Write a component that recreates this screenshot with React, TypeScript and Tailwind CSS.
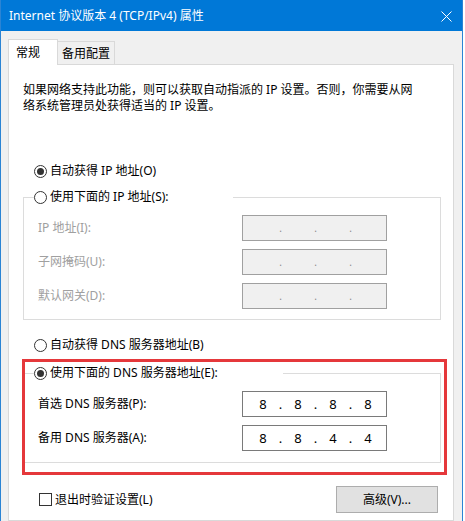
import React from "react";

const FONT = "font-['Noto_Sans','Noto_Sans_CJK_SC',sans-serif]";

function Radio({ checked }: { checked?: boolean }) {
  return (
    <span className="flex items-center justify-center w-[13px] h-[13px] shrink-0 rounded-full border border-[#333333] bg-white">
      {checked && <span className="w-[7px] h-[7px] rounded-full bg-[#333333]" />}
    </span>
  );
}

function IpBox({ values, enabled }: { values: string[]; enabled?: boolean }) {
  const parts: React.ReactNode[] = [];
  values.forEach((v, i) => {
    parts.push(
      <span key={"n" + i} className="w-[28px] text-center">
        {v}
      </span>
    );
    if (i < values.length - 1) {
      parts.push(
        <span
          key={"d" + i}
          className={`w-[7px] text-center ${enabled ? "" : "text-[#8a8a8a] text-[10px]"}`}
        >
          .
        </span>
      );
    }
  });
  return (
    <div
      className={`flex items-center w-[145px] h-[26px] pl-[6px] text-[13px] leading-[16px] border ${
        enabled ? "bg-white border-[#7a7a7a] text-black" : "bg-[#f0f0f0] border-[#a0a0a0]"
      }`}
    >
      {parts}
    </div>
  );
}

function Field({ label, values, enabled }: { label: string; values: string[]; enabled?: boolean }) {
  return (
    <div className="flex items-center h-[26px]">
      <span className={`w-[204px] ${enabled ? "text-black" : "text-[#a0a0a0]"}`}>{label}</span>
      <IpBox values={values} enabled={enabled} />
    </div>
  );
}

export default function App() {
  return (
    <div className={`w-[465px] h-[521px] overflow-hidden bg-white ${FONT} text-[12px] leading-[16px] text-black`}>
      <div className="w-[463px] h-full flex flex-col bg-[#f0f0f0] border-x border-[#2b84d4]">
        {/* title bar */}
        <div className="flex items-center justify-between h-[31px] bg-[#0078d7] pl-[8px] pr-[10px] text-white shrink-0">
          <span>Internet 协议版本 4 (TCP/IPv4) 属性</span>
          <svg width="11" height="11" viewBox="0 0 11 11" className="mt-px">
            <path d="M0.5 0.5 L10.5 10.5 M10.5 0.5 L0.5 10.5" stroke="#ffffff" strokeWidth="1" />
          </svg>
        </div>

        {/* tabs */}
        <div className="flex items-end h-[25px] mt-[8px] ml-[7px] shrink-0">
          <div className="relative z-10 w-[50px] h-[26px] -mb-px pl-[7px] pt-[5px] bg-white border border-b-0 border-[#d9d9d9]">
            常规
          </div>
          <div className="w-[57px] h-[23px] pl-[4px] pt-[4px] bg-[#f0f0f0] border border-b-0 border-l-0 border-[#d9d9d9]">
            备用配置
          </div>
        </div>

        {/* panel */}
        <div className="flex-1 ml-[7px] w-[446px] bg-white border border-[#d9d9d9] pl-[14px]">
          <p className="mt-[17px]">
            如果网络支持此功能，则可以获取自动指派的 IP 设置。否则，你需要从网
            <br />
            络系统管理员处获得适当的 IP 设置。
          </p>

          <div className="flex items-center gap-[3px] h-[16px] mt-[49px] pl-[11px]">
            <Radio checked />
            <span>自动获得 IP 地址(O)</span>
          </div>

          <fieldset className="mt-[10px] w-[418px] border border-[#dcdcdc] pb-[10px]">
            <legend className="ml-[10px] w-[199px] h-[16px] flex items-center gap-[3px]">
              <Radio />
              <span>使用下面的 IP 地址(S):</span>
            </legend>
            <div className="flex flex-col gap-[8px] mt-[10px] pl-[14px]">
              <Field label="IP 地址(I):" values={["", "", "", ""]} />
              <Field label="子网掩码(U):" values={["", "", "", ""]} />
              <Field label="默认网关(D):" values={["", "", "", ""]} />
            </div>
          </fieldset>

          <div className="flex items-center gap-[3px] h-[16px] mt-[17px] pl-[11px]">
            <Radio />
            <span>自动获得 DNS 服务器地址(B)</span>
          </div>

          <div className="relative mt-[12px] w-[418px]">
            <fieldset className="w-[418px] border border-[#dcdcdc] pb-[11px]">
              <legend className="ml-[10px] w-[249px] h-[16px] flex items-center gap-[3px]">
                <Radio checked />
                <span>使用下面的 DNS 服务器地址(E):</span>
              </legend>
              <div className="flex flex-col gap-[8px] mt-[10px] pl-[14px]">
                <Field label="首选 DNS 服务器(P):" values={["8", "8", "8", "8"]} enabled />
                <Field label="备用 DNS 服务器(A):" values={["8", "8", "4", "4"]} enabled />
              </div>
            </fieldset>
            {/* red highlight */}
            <div className="absolute -left-[1px] -top-[6px] w-[425px] h-[116px] border-[3px] border-[#e5383b] pointer-events-none" />
          </div>

          <div className="flex items-center justify-between w-[418px] mt-[23px] pl-[16px] pr-[3px]">
            <div className="flex items-center gap-[3px]">
              <span className="w-[13px] h-[13px] border border-[#333333] bg-white" />
              <span>退出时验证设置(L)</span>
            </div>
            <button className="w-[102px] h-[27px] bg-[#e1e1e1] border border-[#adadad] text-black">
              高级(V)...
            </button>
          </div>
        </div>
      </div>
    </div>
  );
}
